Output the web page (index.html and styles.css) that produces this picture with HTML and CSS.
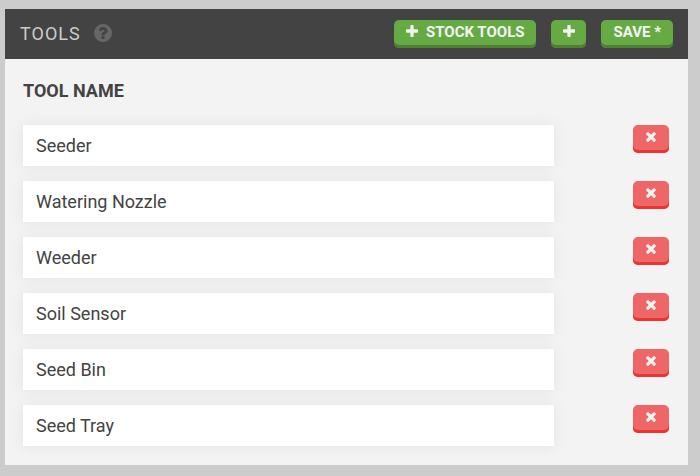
FILE: index.html
```html
<!DOCTYPE html>
<html lang="en">
<head>
    <meta charset="UTF-8">
    <meta name="viewport" content="width=device-width, initial-scale=1.0">
    <title>Tools</title>
    <link rel="stylesheet" href="styles.css">
</head>
<body>
    <!-- shared icons -->
    <svg class="sprite" aria-hidden="true">
        <symbol id="plus" viewBox="192 128 1408 1408">
            <path d="M1600 736v192q0 40-28 68t-68 28h-416v416q0 40-28 68t-68 28h-192q-40 0-68-28t-28-68v-416h-416q-40 0-68-28t-28-68v-192q0-40 28-68t68-28h416v-416q0-40 28-68t68-28h192q40 0 68 28t28 68v416h416q40 0 68 28t28 68z"/>
        </symbol>
        <symbol id="times" viewBox="302 366 1188 1188">
            <path d="M1490 1322q0 40-28 68l-136 136q-28 28-68 28t-68-28l-294-294-294 294q-28 28-68 28t-68-28l-136-136q-28-28-28-68t28-68l294-294-294-294q-28-28-28-68t28-68l136-136q28-28 68-28t68 28l294 294 294-294q28-28 68-28t68 28l136 136q28 28 28 68t-28 68l-294 294 294 294q28 28 28 68z"/>
        </symbol>
        <symbol id="help" viewBox="128 128 1536 1536">
            <path d="M1024 1376v-192q0-14-9-23t-23-9h-192q-14 0-23 9t-9 23v192q0 14 9 23t23 9h192q14 0 23-9t9-23zm256-672q0-88-55.5-163t-138.5-116-170-41q-243 0-371 213-15 24 8 42l132 100q7 6 19 6 16 0 25-12 53-68 86-92 34-24 86-24 48 0 85.5 26t37.5 59q0 38-20 61t-68 45q-63 28-115.5 86.5t-52.5 125.5v36q0 14 9 23t23 9h192q14 0 23-9t9-23q0-19 21.5-49.5t54.5-49.5q32-18 49-28.5t46-35 44.5-48 28-60.5 12.5-81zm384 192q0 209-103 385.5t-279.5 279.5-385.5 103-385.5-103-279.5-279.5-103-385.5 103-385.5 279.5-279.5 385.5-103 385.5 103 279.5 279.5 103 385.5z"/>
        </symbol>
    </svg>

    <form class="widget">
        <div class="widget-header">
            <h1>TOOLS</h1>
            <svg class="help-icon" role="img" aria-label="Help"><use href="#help"/></svg>
            <div class="actions">
                <button type="button" class="btn green"><svg class="icon"><use href="#plus"/></svg>STOCK TOOLS</button>
                <button type="button" class="btn green add" aria-label="Add tool"><svg class="icon"><use href="#plus"/></svg></button>
                <button type="submit" class="btn green">SAVE *</button>
            </div>
        </div>
        <div class="widget-content">
            <h2 id="toolName">TOOL NAME</h2>
            <div class="row">
                <input type="text" aria-labelledby="toolName" value="Seeder">
                <button type="button" class="btn red" aria-label="Delete Seeder"><svg class="icon"><use href="#times"/></svg></button>
            </div>
            <div class="row">
                <input type="text" aria-labelledby="toolName" value="Watering Nozzle">
                <button type="button" class="btn red" aria-label="Delete Watering Nozzle"><svg class="icon"><use href="#times"/></svg></button>
            </div>
            <div class="row">
                <input type="text" aria-labelledby="toolName" value="Weeder">
                <button type="button" class="btn red" aria-label="Delete Weeder"><svg class="icon"><use href="#times"/></svg></button>
            </div>
            <div class="row">
                <input type="text" aria-labelledby="toolName" value="Soil Sensor">
                <button type="button" class="btn red" aria-label="Delete Soil Sensor"><svg class="icon"><use href="#times"/></svg></button>
            </div>
            <div class="row">
                <input type="text" aria-labelledby="toolName" value="Seed Bin">
                <button type="button" class="btn red" aria-label="Delete Seed Bin"><svg class="icon"><use href="#times"/></svg></button>
            </div>
            <div class="row">
                <input type="text" aria-labelledby="toolName" value="Seed Tray">
                <button type="button" class="btn red" aria-label="Delete Seed Tray"><svg class="icon"><use href="#times"/></svg></button>
            </div>
        </div>
    </form>
</body>
</html>
```
FILE: styles.css
```css
* {
    box-sizing: border-box;
}
body {
    margin: 0;
    padding: 9px 12px 11px 5px;
    background-color: #ccc;
    color: #434343;
    font-family: Roboto, sans-serif;
}
.sprite {
    display: none;
}
.widget {
    background-color: #f3f3f3;
}
.widget-header {
    display: flex;
    align-items: center;
    height: 50px;
    padding: 0 15px;
    background-color: #434343;
}
h1 {
    margin: 0;
    color: #ccc;
    font-size: 18px;
    font-weight: 400;
    line-height: 24px;
    letter-spacing: 1px;
}
.help-icon {
    width: 18px;
    height: 18px;
    margin: 0 0 2px 13px;
    fill: #666;
}
.actions {
    display: flex;
    gap: 15px;
    margin-left: auto;
}
.btn {
    display: flex;
    align-items: center;
    justify-content: center;
    height: 28px;
    padding: 0 12px 4px;
    border: none;
    border-radius: 5px;
    color: #f3f3f3;
    font-family: inherit;
    font-size: 15px;
    font-weight: 700;
    line-height: 24px;
    cursor: pointer;
}
.green {
    gap: 8px;
    background-color: #6a4;
    box-shadow: inset 0 -3px #4d8033;
}
.green .icon {
    margin-bottom: 2px;
}
.add {
    width: 35px;
    padding: 0 11px 4px;
}
.red {
    width: 36px;
    background-color: #e66;
    box-shadow: inset 0 -3px #e33;
}
.icon {
    width: 12px;
    height: 12px;
    fill: #f3f3f3;
}
.red .icon {
    width: 10px;
    height: 10px;
}
.widget-content {
    padding: 20px 19px 19px 18px;
}
h2 {
    margin: 0 0 22px;
    font-size: 18px;
    font-weight: 700;
    line-height: 24px;
}
.row {
    display: flex;
    justify-content: space-between;
    align-items: flex-start;
}
.row + .row {
    margin-top: 15px;
}
input {
    width: 82.2%;
    height: 41px;
    padding: 0 13px;
    border: none;
    background-color: #fff;
    box-shadow: 0 0 15px rgba(0, 0, 0, 0.07);
    color: #434343;
    font-family: inherit;
    font-size: 18px;
}
```
